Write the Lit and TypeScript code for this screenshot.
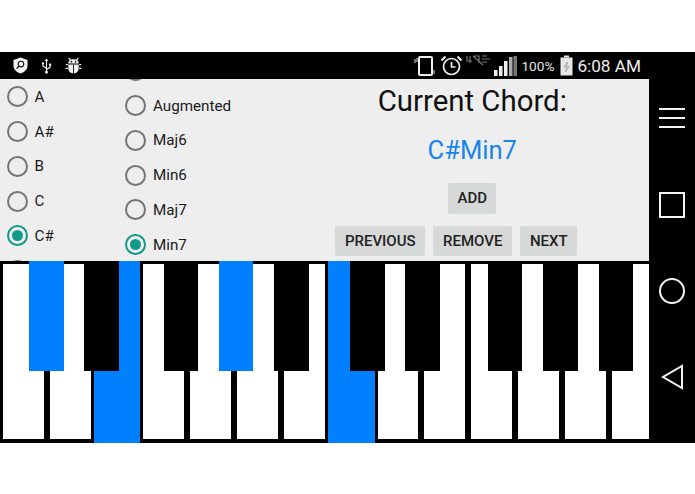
import { LitElement, html, css } from "lit";
import { customElement } from "lit/decorators.js";

const NOTES = ["A", "A#", "B", "C", "C#", ""];
const TYPES = ["", "Augmented", "Maj6", "Min6", "Maj7", "Min7"];
const KEY_W = 46.82;
const WHITE_ON = new Set([2, 7]);
// [left, width, highlighted]
const BLACKS: [number, number, boolean][] = [
  [29, 35, true], [84, 35, false], [164, 34, false], [219, 34, true], [274, 35, false],
  [350, 35, false], [405, 35, false], [488, 34, false], [543, 35, false], [599, 34, false],
];

@customElement("app-root")
export class AppRoot extends LitElement {
  static styles = css`
    :host { display: block; width: 695px; height: 494px; background: #fff; font-family: Roboto, "Liberation Sans", sans-serif; overflow: hidden; }
    .device { margin-top: 52px; height: 391px; display: flex; background: #000; }
    .main { width: 649px; flex: none; display: flex; flex-direction: column; }
    .status { height: 27px; flex: none; display: flex; align-items: center; justify-content: space-between; padding: 0 8px 0 13px; color: #eee; }
    .status-left, .status-right { display: flex; align-items: center; }
    .status-left { gap: 13px; }
    .pct { font-size: 13.6px; margin: 0 6px 0 4px; color: #e4e4e4; }
    .time { font-size: 17.2px; margin-left: 4px; }
    .content { height: 182px; flex: none; background: #eeeeee; display: flex; overflow: hidden; position: relative; }
    .col { flex: none; padding-left: 6.5px; box-sizing: border-box; }
    .col.notes { width: 118.5px; padding-top: 0.6px; }
    .col.types { width: 177px; margin-top: -25.6px; }
    .row { height: 34.75px; display: flex; align-items: center; gap: 7px; font-size: 15.2px; color: #1a1a1a; white-space: nowrap; }
    .radio { width: 21px; height: 21px; box-sizing: border-box; flex: none; border: 2px solid #757575; border-radius: 50%; display: flex; align-items: center; justify-content: center; }
    .radio.on { border-color: #129a88; }
    .radio.on::after { content: ""; width: 11px; height: 11px; border-radius: 50%; background: #129a88; }
    .panel { flex: 1; display: flex; flex-direction: column; align-items: center; padding-top: 5px; }
    .title { font-size: 29.4px; line-height: 34px; color: #111; white-space: nowrap; }
    .chord { font-size: 25.6px; line-height: 30px; color: #1a84ea; margin-top: 17px; }
    button { font: 500 15px Roboto, "Liberation Sans", sans-serif; color: #222; background: #d7d8d8; border: 0; border-radius: 2px; height: 30.5px; padding: 0; }
    .add { width: 48px; margin-top: 18px; }
    .btns { display: flex; gap: 8px; margin: 12px 32px 0 0; }
    .prev { width: 90px; } .rem { width: 79px; } .next { width: 57px; }
    .piano { height: 182px; flex: none; position: relative; overflow: hidden; display: flex; background: #000; }
    .white { width: ${KEY_W}px; flex: none; padding: 3px 3px 4px; box-sizing: border-box; }
    .white i { display: block; height: 100%; background: #fff; }
    .white.on { padding: 0; }
    .white.on i { background: #007fff; }
    .black { position: absolute; top: 0; height: 109.5px; background: #000; }
    .black.on { background: #007fff; }
    .nav { flex: 1; display: flex; flex-direction: column; align-items: center; padding-top: 56px; gap: 60px; }
    .nav svg { display: block; flex: none; }
    .nav .menu { margin-bottom: 3.5px; }
  `;

  private radio(label: string, on: boolean) {
    return html`<div class="row"><span class="radio ${on ? "on" : ""}"></span>${label ? html`<span>${label}</span>` : ""}</div>`;
  }

  render() {
    const blacks = BLACKS.map(
      ([l, w, on]) => html`<div class="black ${on ? "on" : ""}" style="left:${l}px;width:${w}px"></div>`
    );
    return html`
      <div class="device">
        <div class="main">
          <div class="status">
            <div class="status-left">
              <svg width="15" height="17" viewBox="0 0 16 18">
                <path d="M8 0.5 L15.5 3 V9 C15.5 13.5 11.5 16.5 8 17.5 C4.5 16.5 0.5 13.5 0.5 9 V3 Z" fill="#f2f2f2"/>
                <circle cx="8.5" cy="7.5" r="3" fill="none" stroke="#111" stroke-width="1.2"/>
                <path d="M6.3 9.8 L3.8 12.3" stroke="#111" stroke-width="1.4"/>
              </svg>
              <svg width="11" height="16" viewBox="0 0 12 18" fill="none" stroke="#f2f2f2" stroke-width="1.3">
                <path d="M6 2.5 V16.5 M6 11.5 L2 9 V6.5 M6 13 L10 10.5 V8" />
                <path d="M6 0.5 L8 3.5 H4 Z" fill="#f2f2f2" stroke="none"/>
                <circle cx="6" cy="16" r="1.6" fill="#f2f2f2" stroke="none"/>
                <circle cx="2" cy="6" r="1.3" fill="#f2f2f2" stroke="none"/>
                <rect x="8.8" y="6.3" width="2.4" height="2.4" fill="#f2f2f2" stroke="none"/>
              </svg>
              <svg width="17" height="17" viewBox="0 0 18 18">
                <path d="M4 1 L6 3.5 M14 1 L12 3.5" stroke="#f2f2f2" stroke-width="1.3"/>
                <path d="M3.5 7 C3.5 3.5 6 2.5 9 2.5 C12 2.5 14.5 3.5 14.5 7 Z" fill="#f2f2f2"/>
                <path d="M3.5 8 H14.5 V12 C14.5 15.5 12 17.5 9 17.5 C6 17.5 3.5 15.5 3.5 12 Z" fill="#f2f2f2"/>
                <path d="M9 8 V17.5" stroke="#111" stroke-width="1"/>
                <path d="M1 8 H3 M15 8 H17 M0.5 12 H3 M15 12 H17.5" stroke="#f2f2f2" stroke-width="1.4"/>
                <circle cx="6.8" cy="5" r="0.9" fill="#111"/><circle cx="11.2" cy="5" r="0.9" fill="#111"/>
              </svg>
            </div>
            <div class="status-right">
              <svg width="22" height="20" viewBox="0 0 22 20" fill="none" stroke="#eee">
                <rect x="5" y="1" width="13" height="18" rx="1" stroke-width="2"/>
                <path d="M1 3 V7 M3 2 V6 M20 14 V18" stroke-width="1.2" opacity=".8"/>
              </svg>
              <svg width="23" height="21" viewBox="0 0 23 21" fill="none" stroke="#eee" stroke-width="1.7" style="margin-left:4px">
                <circle cx="11.5" cy="11.5" r="8"/>
                <path d="M11.5 7 V12 H15.5"/>
                <path d="M1.5 5.5 L5.5 1.5 M21.5 5.5 L17.5 1.5" stroke-width="2"/>
              </svg>
              <svg width="25" height="11" viewBox="0 0 25 11" fill="none" stroke="#777" stroke-width="1.2" style="margin:-11px 0 0 3px">
                <path d="M1 1 V6 H6 M4 1 V8 M8 1 H13 V8 M16 1 L21 1 M16 4 H24 M16 7 H21 M7 1 L17 10"/>
              </svg>
              <svg width="23" height="20" viewBox="0 0 23 20" style="margin-left:3px">
                <rect x="0" y="14" width="3.5" height="6" fill="#eee"/>
                <rect x="5" y="10" width="3.5" height="10" fill="#eee"/>
                <rect x="10" y="5" width="3.5" height="15" fill="#eee"/>
                <rect x="15" y="1" width="3.5" height="19" fill="#aaa"/>
                <rect x="19.5" y="0" width="3.5" height="20" fill="#777"/>
              </svg>
              <span class="pct">100%</span>
              <svg width="13" height="21" viewBox="0 0 13 21">
                <rect x="4" y="0.5" width="5" height="2" fill="#e8e8e8"/>
                <rect x="0.5" y="2.5" width="12" height="18" fill="#e8e8e8"/>
                <path d="M7.5 7 L4 12 H6.5 L5.5 17 L9 11.5 H6.5 Z" fill="none" stroke="#999" stroke-width="0.8"/>
              </svg>
              <span class="time">6:08 AM</span>
            </div>
          </div>
          <div class="content">
            <div class="col notes">${NOTES.map((n) => this.radio(n, n === "C#"))}</div>
            <div class="col types">${TYPES.map((t) => this.radio(t, t === "Min7"))}</div>
            <div class="panel">
              <div class="title">Current Chord:</div>
              <div class="chord">C#Min7</div>
              <button class="add">ADD</button>
              <div class="btns">
                <button class="prev">PREVIOUS</button>
                <button class="rem">REMOVE</button>
                <button class="next">NEXT</button>
              </div>
            </div>
          </div>
          <div class="piano">
            ${Array.from({ length: 14 }, (_, i) => html`<div class="white ${WHITE_ON.has(i) ? "on" : ""}"><i></i></div>`)}
            ${blacks}
          </div>
        </div>
        <div class="nav">
          <svg class="menu" width="26" height="20" viewBox="0 0 26 20" stroke="#f2f2f2" stroke-width="2"><path d="M0 1 H26 M0 10 H26 M0 19 H26"/></svg>
          <svg width="26" height="26" viewBox="0 0 26 26" fill="none" stroke="#f2f2f2" stroke-width="2"><rect x="1" y="1" width="24" height="24"/></svg>
          <svg width="26" height="26" viewBox="0 0 26 26" fill="none" stroke="#f2f2f2" stroke-width="2"><circle cx="13" cy="13" r="12"/></svg>
          <svg width="24" height="26" viewBox="0 0 24 26" fill="none" stroke="#f2f2f2" stroke-width="2"><path d="M22 2 V24 L3 13 Z"/></svg>
        </div>
      </div>
    `;
  }
}
